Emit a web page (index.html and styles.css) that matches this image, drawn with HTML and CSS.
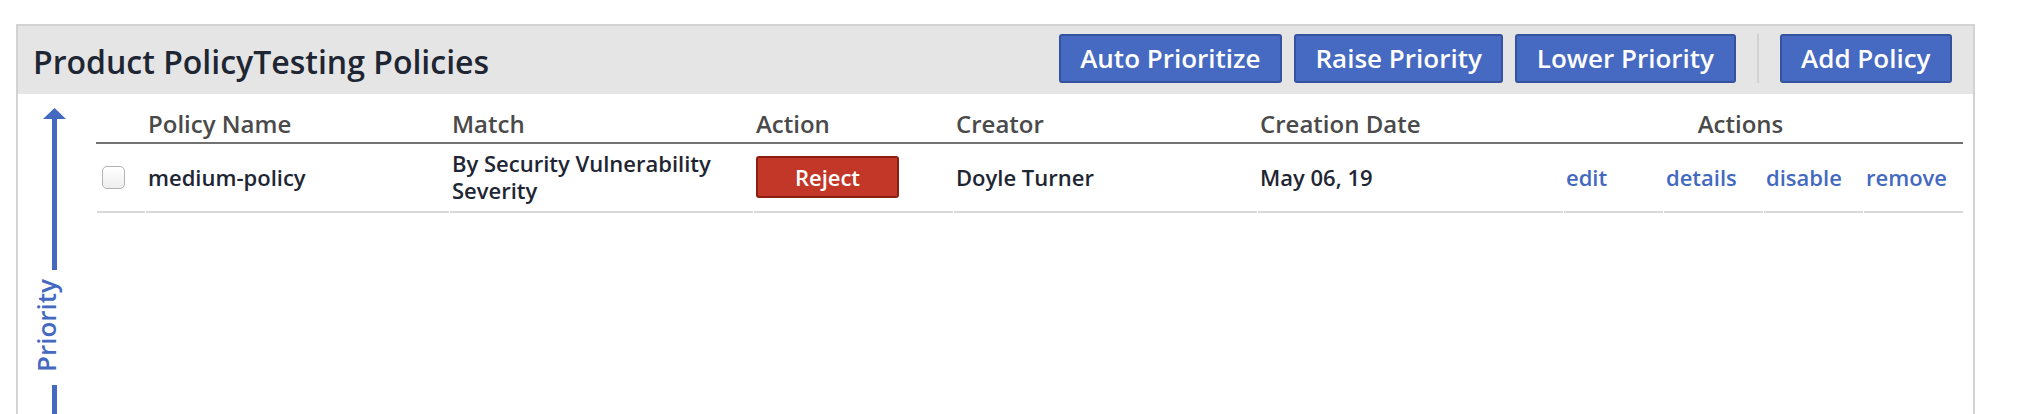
FILE: index.html
```html
<!DOCTYPE html>
<html lang="en">
<head>
<meta charset="utf-8">
<title>Product Policy Testing Policies</title>
<link rel="stylesheet" href="styles.css">
</head>
<body>
<section class="panel">
  <header class="panel-header">
    <h2 class="title">Product PolicyTesting Policies</h2>
    <div class="toolbar">
      <button class="btn" type="button">Auto Prioritize</button>
      <button class="btn" type="button">Raise Priority</button>
      <button class="btn" type="button">Lower Priority</button>
      <span class="divider"></span>
      <button class="btn" type="button">Add Policy</button>
    </div>
  </header>
  <div class="panel-body">
    <div class="priority">
      <svg class="arrow-head" width="23" height="11" viewBox="0 0 23 11" aria-hidden="true"><polygon points="11.5,0 23,11 0,11" fill="#4469c0"/></svg>
      <span class="priority-line"></span>
      <span class="priority-label">Priority</span>
      <span class="priority-line"></span>
    </div>
    <table class="policies">
      <colgroup>
        <col class="c-check"><col class="c-name"><col class="c-match"><col class="c-action"><col class="c-creator"><col class="c-date"><col class="c-link"><col class="c-link"><col class="c-link"><col class="c-link">
      </colgroup>
      <thead>
        <tr>
          <th></th>
          <th>Policy Name</th>
          <th>Match</th>
          <th>Action</th>
          <th>Creator</th>
          <th>Creation Date</th>
          <th class="th-actions" colspan="4">Actions</th>
        </tr>
      </thead>
      <tbody>
        <tr>
          <td><span class="checkbox"></span></td>
          <td>medium-policy</td>
          <td>By Security Vulnerability Severity</td>
          <td><span class="reject">Reject</span></td>
          <td>Doyle Turner</td>
          <td>May 06, 19</td>
          <td><a class="link" href="#">edit</a></td>
          <td><a class="link" href="#">details</a></td>
          <td><a class="link" href="#">disable</a></td>
          <td><a class="link" href="#">remove</a></td>
        </tr>
      </tbody>
    </table>
  </div>
</section>
</body>
</html>
```

FILE: styles.css
```css
html, body {
  background: #ffffff;
}
body {
  margin: 24px 47px 0 16px;
  font-family: "Open Sans", "Noto Sans", "Liberation Sans", sans-serif;
  color: #1e2533;
}
.panel {
  border: 2px solid #d3d3d3;
  border-bottom: none;
  min-height: 520px;
}
.panel-header {
  display: flex;
  align-items: flex-start;
  justify-content: space-between;
  background: #e5e5e5;
  height: 68px;
  box-sizing: border-box;
  padding: 8px 21px 0 15px;
}
.title {
  margin: 6px 0 0;
  font-size: 32px;
  line-height: 44px;
  font-weight: 600;
  color: #1e2533;
}
.toolbar {
  display: flex;
  align-items: stretch;
  gap: 12px;
}
.btn {
  height: 49px;
  box-sizing: border-box;
  padding: 0 19.5px;
  border: 2px solid #34529d;
  border-radius: 3px;
  background: #4669c1;
  color: #ffffff;
  font-family: inherit;
  font-size: 26px;
  font-weight: 600;
  line-height: 45px;
  white-space: nowrap;
}
.divider {
  width: 2px;
  margin: 0 9px;
  background: #d2d2d2;
}
.panel-body {
  display: flex;
  align-items: flex-start;
}
.priority {
  flex: none;
  width: 73px;
  padding-top: 14px;
  display: flex;
  flex-direction: column;
  align-items: center;
}
.arrow-head {
  display: block;
}
.priority-line {
  display: block;
  width: 5px;
  height: 151px;
  background: #4469c0;
}
.priority-label {
  writing-mode: vertical-rl;
  transform: rotate(180deg);
  margin: 9px 17px 13px 0;
  font-size: 26px;
  font-weight: 600;
  line-height: 36px;
  color: #4469c0;
}
.policies {
  flex: none;
  margin: 13px 0 0 5px;
  width: 1867px;
  table-layout: fixed;
  border-collapse: separate;
  border-spacing: 0;
}
.c-check { width: 49px; }
.c-name { width: 304px; }
.c-match { width: 304px; }
.c-action { width: 200px; }
.c-creator { width: 304px; }
.c-date { width: 306px; }
.c-link { width: 100px; }
.policies th {
  padding: 0 3px 2px;
  border-bottom: 2px solid #727272;
  text-align: left;
  vertical-align: bottom;
  font-size: 24px;
  font-weight: 600;
  line-height: 33px;
  color: #4a4a4a;
  white-space: nowrap;
}
.policies .th-actions {
  text-align: center;
  padding-right: 48px;
}
.policies td {
  padding: 6px 3px 9px;
  vertical-align: middle;
  font-size: 22px;
  font-weight: 600;
  line-height: 27px;
  color: #1e2533;
  background-image: linear-gradient(#d9d9d9, #d9d9d9);
  background-size: calc(100% - 1px) 2px;
  background-position: right bottom;
  background-repeat: no-repeat;
}
.checkbox {
  display: block;
  width: 23px;
  height: 23px;
  box-sizing: border-box;
  margin-left: 3px;
  border: 1px solid #b3b3b3;
  border-radius: 5px;
  background: linear-gradient(#ffffff, #eeeeee);
}
.reject {
  display: block;
  width: 143px;
  height: 42px;
  box-sizing: border-box;
  border: 2px solid #8c1d13;
  border-radius: 3px;
  background: #c23727;
  color: #ffffff;
  text-align: center;
  font-size: 22px;
  font-weight: 600;
  line-height: 38px;
}
.link {
  color: #4469c0;
  text-decoration: none;
}
```
